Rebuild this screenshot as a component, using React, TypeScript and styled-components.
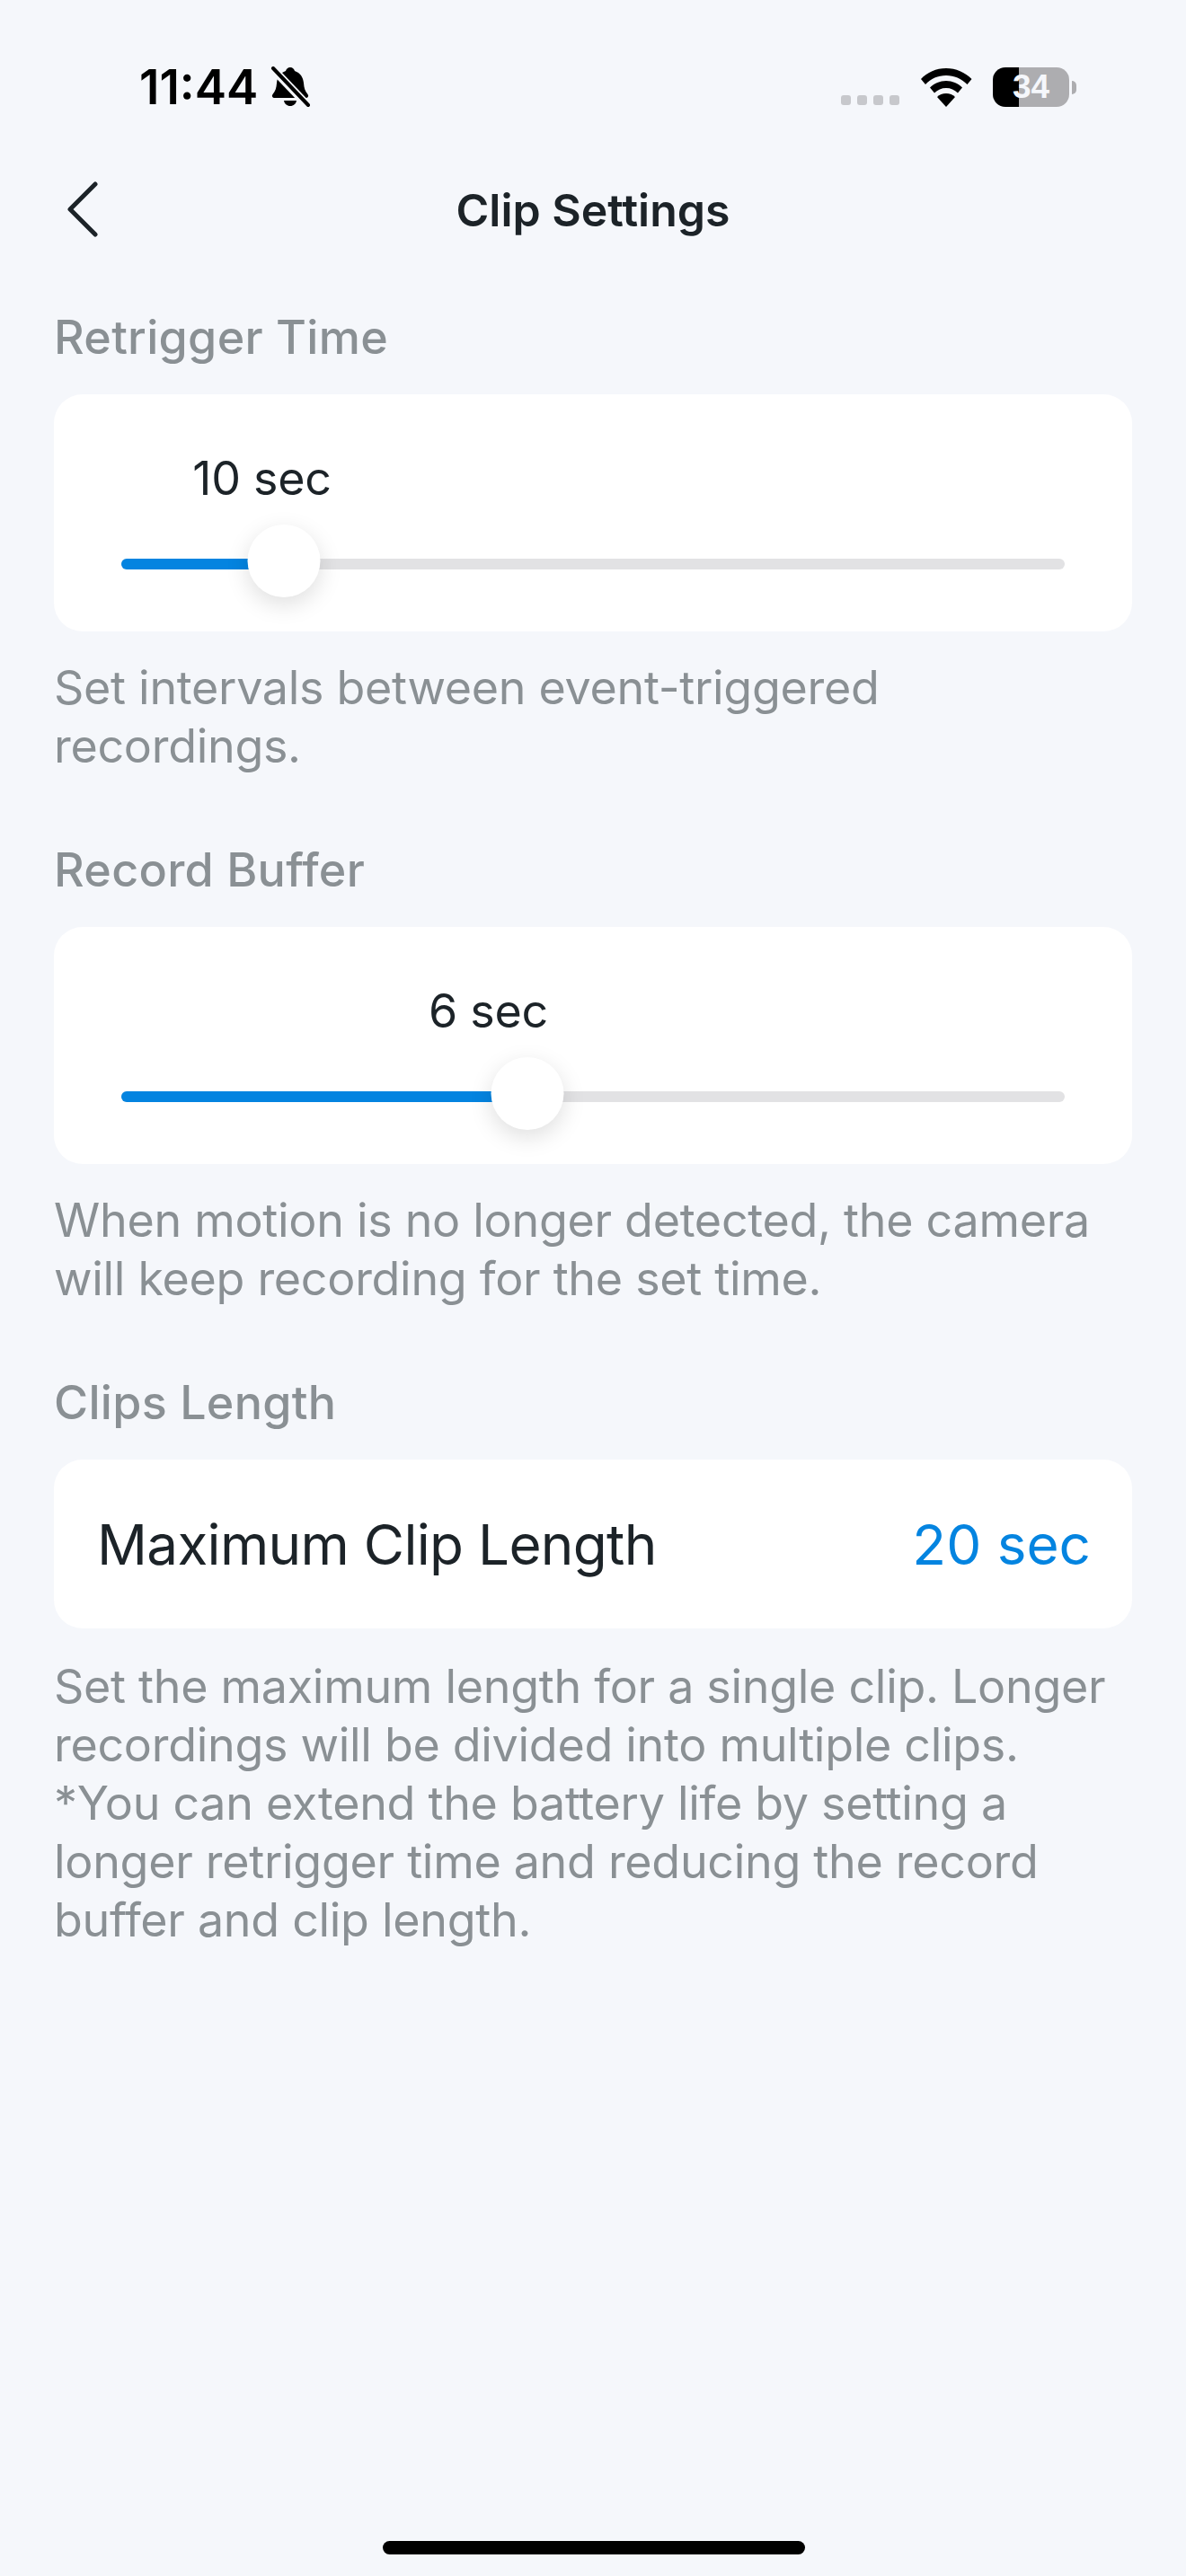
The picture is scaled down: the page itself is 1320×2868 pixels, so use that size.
import React from 'react';
import styled, { createGlobalStyle } from 'styled-components';

const GlobalStyle = createGlobalStyle`
  html, body {
    margin: 0;
    padding: 0;
    background: #f5f7fb;
  }
  * {
    box-sizing: border-box;
  }
`;

const Page = styled.div`
  position: relative;
  width: 1320px;
  height: 2868px;
  overflow: hidden;
  background: #f5f7fb;
  color: #1c2328;
  font-family: Inter, 'Liberation Sans', sans-serif;
`;

const StatusBar = styled.div`
  display: flex;
  align-items: flex-start;
  justify-content: space-between;
  height: 198px;
  padding: 73px 122px 0 155px;
`;

const StatusLeft = styled.div`
  display: flex;
  align-items: center;
  gap: 14px;
`;

const Time = styled.span`
  color: #000;
  font-size: 53px;
  font-weight: 600;
  line-height: 48px;
`;

const StatusRight = styled.div`
  display: flex;
  align-items: center;
  margin-top: 2px;
`;

const Signal = styled.div`
  display: flex;
  gap: 7px;
  margin: 29px 23px 0 0;
`;

const SignalDot = styled.span`
  width: 11px;
  height: 11px;
  border-radius: 3px;
  background: #c7c8cc;
`;

const Battery = styled.div`
  display: flex;
  align-items: center;
  justify-content: center;
  width: 85px;
  height: 44px;
  margin-left: 23px;
  border-radius: 14px;
  background: linear-gradient(to right, #000 34%, #adadb0 34%);
  color: #f5f7fb;
  font-family: 'Liberation Sans', sans-serif;
  font-size: 37px;
  font-weight: 700;
`;

const BatteryCap = styled.span`
  width: 5px;
  height: 15px;
  margin-left: 3px;
  border-radius: 0 6px 6px 0;
  background: #adadb0;
`;

const NavBar = styled.div`
  position: relative;
  display: flex;
  align-items: center;
  justify-content: center;
  height: 72px;
  font-size: 50px;
  font-weight: 600;
`;

const BackButton = styled.svg`
  position: absolute;
  left: 73px;
  top: 3px;
`;

const Content = styled.div`
  padding: 0 60px;
`;

const SectionTitle = styled.div`
  margin-top: 74px;
  color: #8a9094;
  font-size: 52px;
  font-weight: 500;
  letter-spacing: 0.3px;
  line-height: 64px;
`;

const Card = styled.div`
  height: 264px;
  margin-top: 31px;
  padding: 183px 75px 0;
  border-radius: 32px;
  background: #fff;
`;

const Track = styled.div`
  position: relative;
  height: 12px;
  border-radius: 6px;
  background: #e2e2e4;
`;

const Fill = styled.div`
  height: 100%;
  border-radius: 6px;
  background: #0484e0;
`;

const Thumb = styled.div`
  position: absolute;
  top: -38px;
  width: 81px;
  height: 81px;
  border-radius: 50%;
  background: #fff;
  box-shadow: 0 8px 26px rgba(0, 0, 0, 0.13);
  transform: translateX(-50%);
`;

const SliderValue = styled.div`
  position: absolute;
  bottom: 69px;
  color: #1c2328;
  font-size: 52px;
  letter-spacing: -0.3px;
  line-height: 64px;
  white-space: nowrap;
  transform: translateX(-50%);
`;

const Hint = styled.p`
  margin: 30px 0 0;
  color: #8a9094;
  font-size: 52px;
  letter-spacing: -0.3px;
  line-height: 65px;
`;

const Row = styled.div`
  display: flex;
  align-items: center;
  justify-content: space-between;
  height: 188px;
  margin-top: 31px;
  padding: 0 46px 0 48px;
  border-radius: 32px;
  background: #fff;
  font-size: 62px;

  & + ${Hint} {
    margin-top: 32px;
  }
`;

const RowLabel = styled.span`
  letter-spacing: -0.7px;
`;

const RowValue = styled.span`
  color: #0484e0;
`;

const HomeIndicator = styled.div`
  position: absolute;
  left: 426px;
  bottom: 24px;
  width: 470px;
  height: 15px;
  border-radius: 8px;
  background: #000;
`;

type SliderProps = { value: string; percent: number; labelAt: number };

const Slider: React.FC<SliderProps> = ({ value, percent, labelAt }) => (
  <Card>
    <Track>
      <Fill style={{ width: `${percent}%` }} />
      <Thumb style={{ left: `${percent}%` }} />
      <SliderValue style={{ left: `${labelAt}%` }}>{value}</SliderValue>
    </Track>
  </Card>
);

export default function App() {
  return (
    <Page>
      <GlobalStyle />
      <StatusBar>
        <StatusLeft>
          <Time>11:44</Time>
          <svg width="44" height="46" viewBox="0 0 44 46">
            <path d="M22 1c2.600 0 4.500 1.800 5 4 6 2 9.500 7 10 13.500.4 5.500 1.500 9 4.500 12.500 1.300 1.600.5 4-2 4H4.500c-2.500 0-3.300-2.400-2-4 3-3.500 4.100-7 4.500-12.500C7.500 12 11 7 17 5c.5-2.200 2.400-4 5-4z" fill="#000" />
            <path d="M15 38h14c-.5 3.500-3.400 6-7 6s-6.500-2.500-7-6z" fill="#000" />
            <path d="M3 3l38 40" stroke="#f5f7fb" strokeWidth="9" />
            <path d="M3 2l39 41" stroke="#000" strokeWidth="4" strokeLinecap="round" />
          </svg>
        </StatusLeft>
        <StatusRight>
          <Signal>
            <SignalDot />
            <SignalDot />
            <SignalDot />
            <SignalDot />
          </Signal>
          <svg width="58" height="43" viewBox="0 0 58 43">
            <path d="M29 0c11 0 21 4.500 28.500 12l-5 6C46 11.500 38 8 29 8S12 11.500 6 18l-5-6C8 4.500 18 0 29 0z" fill="#000" />
            <path d="M29 14c7 0 13 2.800 18 7.500l-5 6C38.500 24 34 22 29 22s-9.500 2-13 5.500l-5-6C16 16.800 22 14 29 14z" fill="#000" />
            <path d="M29 28c4 0 7.500 1.500 10 4L29 43 19 32c2.500-2.500 6-4 10-4z" fill="#000" />
          </svg>
          <Battery>34</Battery>
          <BatteryCap />
        </StatusRight>
      </StatusBar>
      <NavBar>
        <BackButton width="40" height="64" viewBox="0 0 40 64">
          <path d="M33 4L5 32l28 28" fill="none" stroke="#1c2328" strokeWidth="5" strokeLinecap="round" strokeLinejoin="round" />
        </BackButton>
        Clip Settings
      </NavBar>
      <Content>
        <SectionTitle>Retrigger Time</SectionTitle>
        <Slider value="10 sec" percent={17.2} labelAt={14.9} />
        <Hint>Set intervals between event-triggered recordings.</Hint>
        <SectionTitle>Record Buffer</SectionTitle>
        <Slider value="6 sec" percent={43} labelAt={38.9} />
        <Hint>When motion is no longer detected, the camera will keep recording for the set time.</Hint>
        <SectionTitle>Clips Length</SectionTitle>
        <Row>
          <RowLabel>Maximum Clip Length</RowLabel>
          <RowValue>20 sec</RowValue>
        </Row>
        <Hint>
          Set the maximum length for a single clip. Longer recordings will be divided into multiple clips.
          <br />
          *You can extend the battery life by setting a longer retrigger time and reducing the record buffer and clip length.
        </Hint>
      </Content>
      <HomeIndicator />
    </Page>
  );
}
